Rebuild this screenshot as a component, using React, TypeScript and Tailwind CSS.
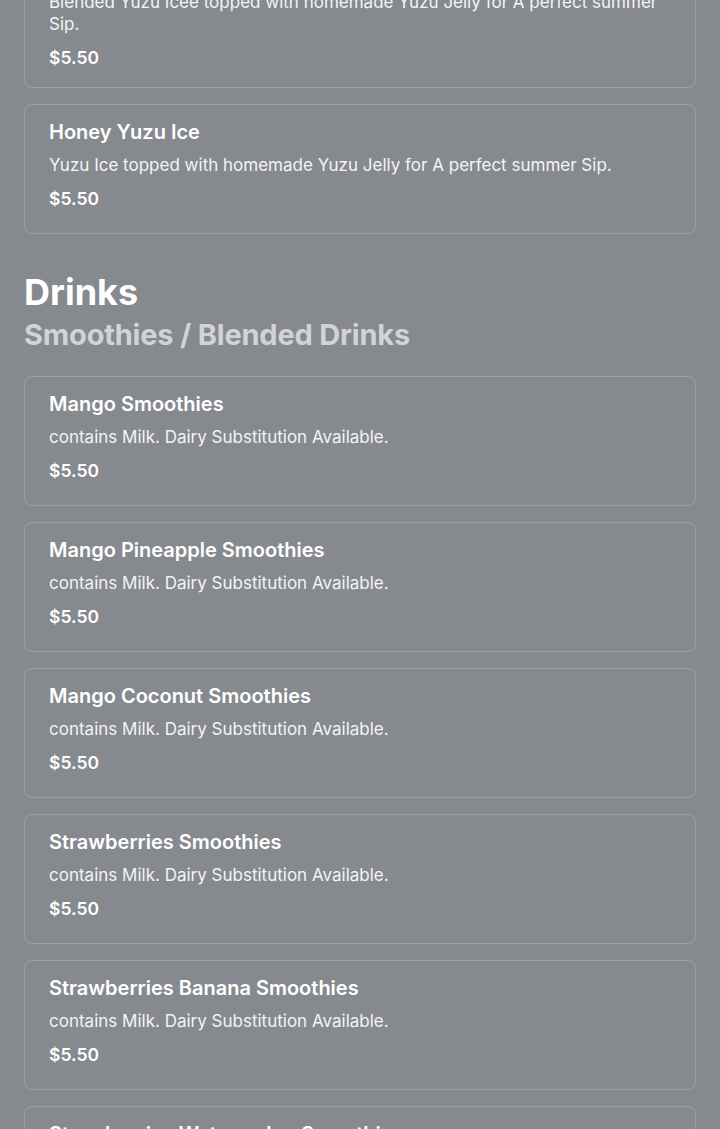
import React from "react";

interface Item {
  name: string;
  desc: string;
  price: string;
}

const yuzu: Item[] = [
  {
    name: "Yuzu Icee",
    desc: "Blended Yuzu Icee topped with homemade Yuzu Jelly for A perfect summer Sip.",
    price: "$5.50",
  },
  {
    name: "Honey Yuzu Ice",
    desc: "Yuzu Ice topped with homemade Yuzu Jelly for A perfect summer Sip.",
    price: "$5.50",
  },
];

const milk = "contains Milk. Dairy Substitution Available.";

const smoothies: Item[] = [
  { name: "Mango Smoothies", desc: milk, price: "$5.50" },
  { name: "Mango Pineapple Smoothies", desc: milk, price: "$5.50" },
  { name: "Mango Coconut Smoothies", desc: milk, price: "$5.50" },
  { name: "Strawberries Smoothies", desc: milk, price: "$5.50" },
  { name: "Strawberries Banana Smoothies", desc: milk, price: "$5.50" },
  { name: "Strawberries Watermelon Smoothies", desc: milk, price: "$5.50" },
];

const MenuCard = ({ item }: { item: Item }) => (
  <div className="min-h-[130px] rounded-lg border border-[#9c9fa4] px-6 pt-[14px] pb-[17px] flex flex-col">
    <h3 className="text-[20px] leading-[26px] font-semibold text-white">{item.name}</h3>
    <p className="mt-[9px] text-[17px] leading-[22px] text-[#f3f4f6]">{item.desc}</p>
    <p className="mt-[11px] text-[17.5px] leading-[24px] font-semibold text-white">{item.price}</p>
  </div>
);

export default function App() {
  return (
    <div
      className="h-[1129px] bg-[#86898e] overflow-hidden"
      style={{ fontFamily: "Inter, 'Noto Sans', sans-serif" }}
    >
      {/* page is scrolled down, first card is cut at top */}
      <div className="px-6 -mt-[59px]">
        <div className="flex flex-col gap-4">
          {yuzu.map((it) => (
            <MenuCard key={it.name} item={it} />
          ))}
        </div>

        <h1 className="mt-[38px] text-[36px] leading-[40px] font-bold text-white">Drinks</h1>
        <h2 className="mt-[5px] text-[29px] leading-[36px] font-bold tracking-[-0.2px] text-[#d2d3d6]">
          Smoothies / Blended Drinks
        </h2>

        <div className="mt-[23px] flex flex-col gap-4 pb-10">
          {smoothies.map((it) => (
            <MenuCard key={it.name} item={it} />
          ))}
        </div>
      </div>
    </div>
  );
}
